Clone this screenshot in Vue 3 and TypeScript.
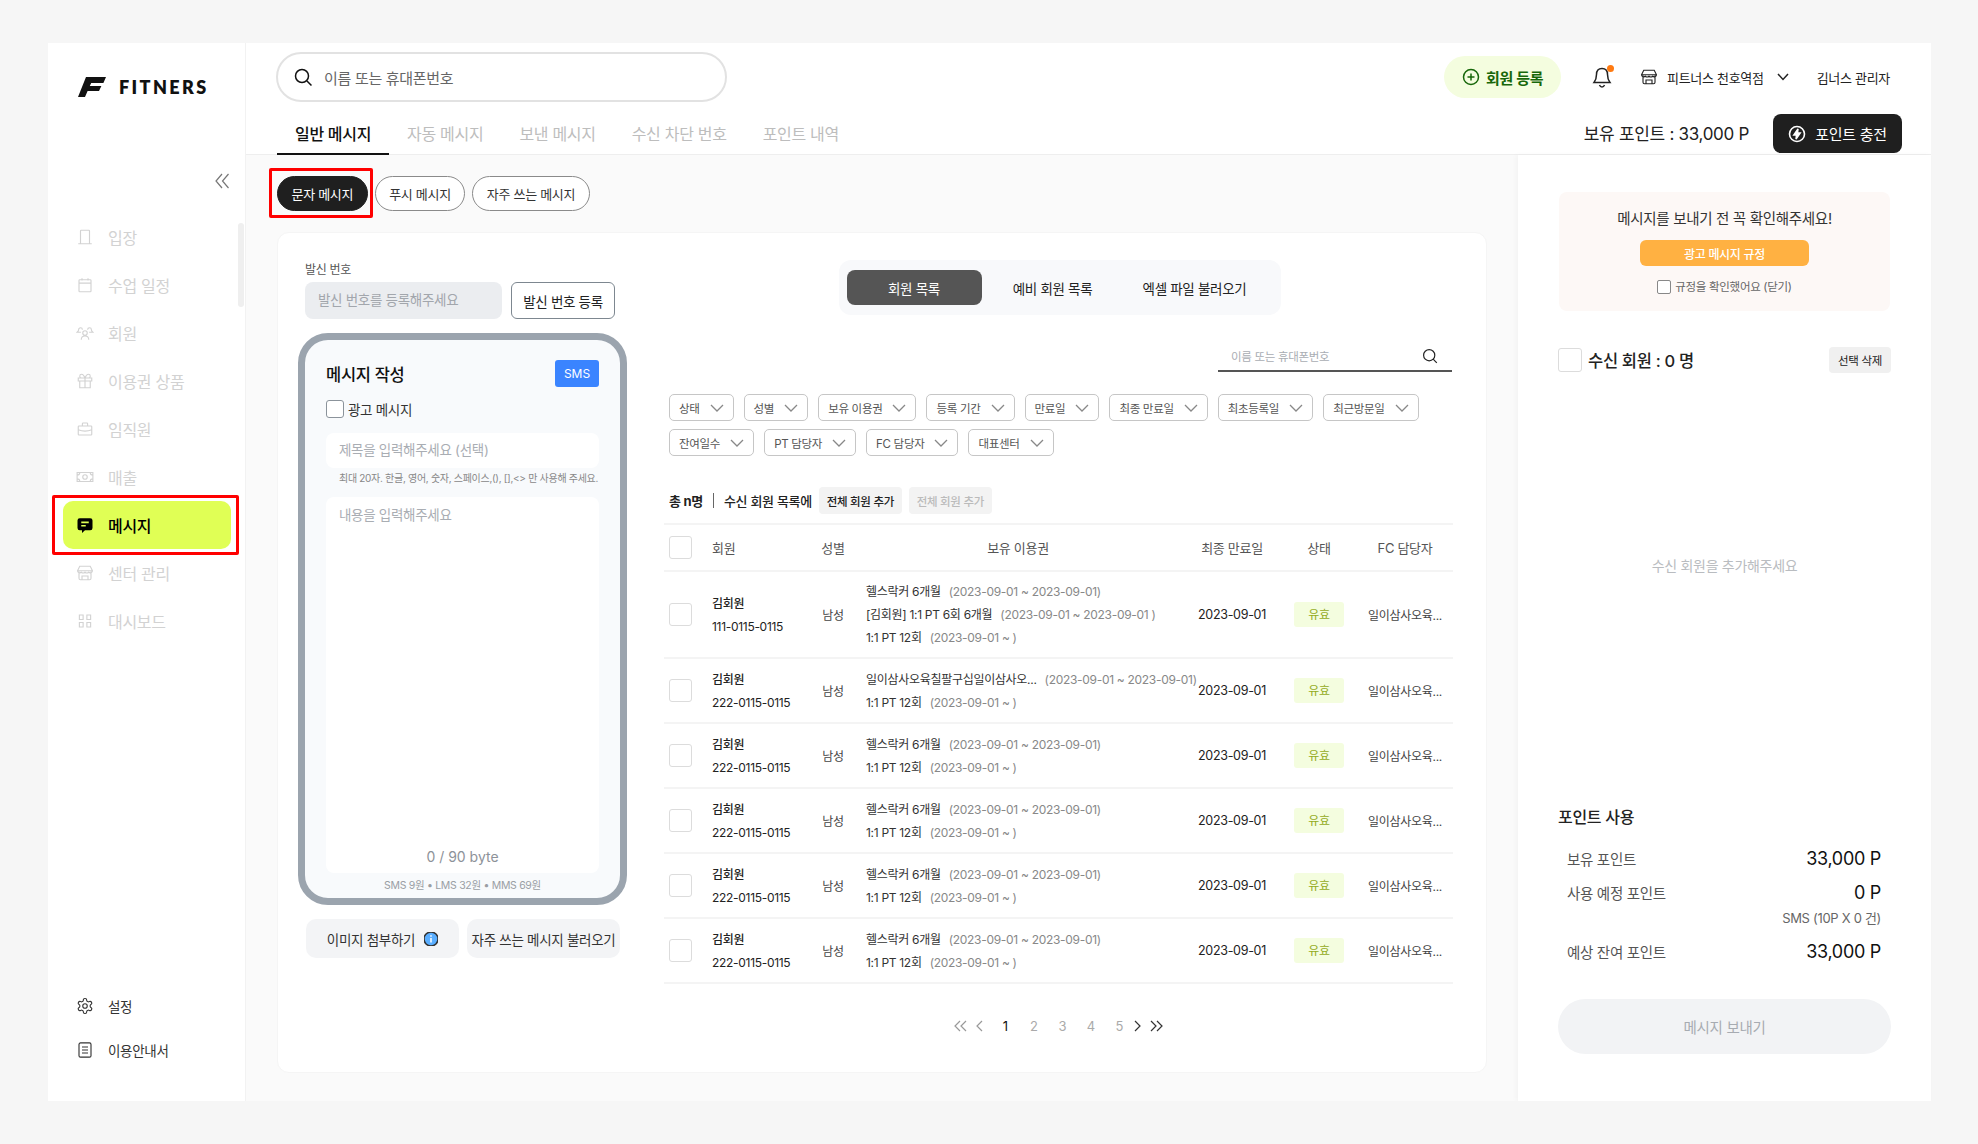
<template>
  <div class="frame">
    <aside class="sidebar">
      <div class="logo">
        <svg width="28" height="20" viewBox="0 0 28 20"><path d="M8 0H28L25.4 6H13.2L11.8 9H23.4L21 14H9.6L7 20H0Z" fill="#111" /></svg>
        <span>FITNERS</span>
      </div>
      <button class="collapse">
        <svg width="16" height="16" viewBox="0 0 16 16"><path d="M8 1 2 8l6 7M14.5 1l-6 7 6 7" /></svg>
      </button>
      <nav class="nav">
        <a v-for="item in navItems" :key="item.label" class="nav-item" :class="{ active: item.active }">
          <svg v-if="item.active" class="nav-icon" viewBox="0 0 24 24">
            <path d="M5 3h14a3 3 0 0 1 3 3v10a3 3 0 0 1-3 3h-7l-4 3.500V19H5a3 3 0 0 1-3-3V6a3 3 0 0 1 3-3z" fill="#000" />
            <path d="M7 8.500h10M7 13h6" stroke="#e0ff55" stroke-width="2.200" fill="none" />
          </svg>
          <svg v-else class="nav-icon" viewBox="0 0 24 24"><path :d="item.icon" /></svg>
          <span>{{ item.label }}</span>
        </a>
        <i class="scroll-thumb"></i>
      </nav>
      <div class="side-bottom">
        <a class="bottom-item">
          <svg class="nav-icon" viewBox="0 0 24 24"><path d="M12.220 2h-.44a2 2 0 0 0-2 2v.18a2 2 0 0 1-1 1.730l-.43.25a2 2 0 0 1-2 0l-.15-.08a2 2 0 0 0-2.730.73l-.22.38a2 2 0 0 0 .73 2.730l.15.1a2 2 0 0 1 1 1.720v.51a2 2 0 0 1-1 1.740l-.15.09a2 2 0 0 0-.73 2.730l.22.38a2 2 0 0 0 2.730.73l.15-.08a2 2 0 0 1 2 0l.43.25a2 2 0 0 1 1 1.730V20a2 2 0 0 0 2 2h.44a2 2 0 0 0 2-2v-.18a2 2 0 0 1 1-1.730l.43-.25a2 2 0 0 1 2 0l.15.08a2 2 0 0 0 2.730-.73l.22-.39a2 2 0 0 0-.73-2.730l-.15-.08a2 2 0 0 1-1-1.740v-.5a2 2 0 0 1 1-1.740l.15-.09a2 2 0 0 0 .73-2.730l-.22-.38a2 2 0 0 0-2.730-.73l-.15.08a2 2 0 0 1-2 0l-.43-.25a2 2 0 0 1-1-1.730V4a2 2 0 0 0-2-2zM12 15a3 3 0 1 0 0-6 3 3 0 0 0 0 6z" /></svg>
          <span>설정</span>
        </a>
        <a class="bottom-item">
          <svg class="nav-icon" viewBox="0 0 24 24"><path d="M6 2.500h12a2 2 0 0 1 2 2v15a2 2 0 0 1-2 2H6a2 2 0 0 1-2-2v-15a2 2 0 0 1 2-2zM8 8h8M8 12h8M8 16h8" /></svg>
          <span>이용안내서</span>
        </a>
      </div>
    </aside>

    <div class="main">
      <header class="header">
        <div class="header-top">
          <div class="search">
            <svg width="20" height="20" viewBox="0 0 20 20"><circle cx="9" cy="9" r="6.500" /><path d="m14 14 4.500 4.500" /></svg>
            <span>이름 또는 휴대폰번호</span>
          </div>
          <div class="top-actions">
            <button class="register">
              <svg width="18" height="18" viewBox="0 0 18 18"><circle cx="9" cy="9" r="7.500" /><path d="M9 5.500v7M5.500 9h7" /></svg>
              회원 등록
            </button>
            <span class="bell">
              <svg width="20" height="22" viewBox="0 0 20 22"><path d="M10 2.500c-3.500 0-5.500 2.500-5.500 6 0 4-1 6-2.500 8h16c-1.500-2-2.500-4-2.500-8 0-3.500-2-6-5.500-6zM7.500 19c.5 1.300 1.400 2 2.500 2s2-.7 2.500-2" /></svg>
              <i></i>
            </span>
            <span class="branch">
              <svg width="18" height="18" viewBox="0 0 24 24"><path d="M4 10v9a2 2 0 0 0 2 2h12a2 2 0 0 0 2-2v-9M5 3h14l3 6a3 3 0 0 1-5 2 3.500 3.500 0 0 1-5 0 3.500 3.500 0 0 1-5 0 3 3 0 0 1-5-2zM2.500 9h19M8 21v-5h8v5" /></svg>
              피트너스 천호역점
              <svg class="chev" width="12" height="8" viewBox="0 0 12 8"><path d="m1 1 5 5.500L11 1" /></svg>
            </span>
            <span class="admin">김너스 관리자</span>
          </div>
        </div>
        <div class="header-bottom">
          <div class="tabs">
            <a v-for="(tab, i) in tabs" :key="tab" class="tab" :class="{ on: i === 0 }">{{ tab }}</a>
          </div>
          <div class="point-area">
            <span class="point-text">보유 포인트 : 33,000 P</span>
            <button class="charge">
              <svg width="18" height="18" viewBox="0 0 18 18">
                <circle cx="9" cy="9" r="7.500" fill="none" stroke="#fff" stroke-width="1.600" />
                <path d="M10 3.800 5.800 10H8.500L8 14.200 12.200 8H9.500z" fill="#fff" />
              </svg>
              포인트 충전
            </button>
          </div>
        </div>
      </header>

      <div class="body">
        <section class="content">
          <div class="pills">
            <button v-for="(pill, i) in pills" :key="pill" class="pill" :class="{ on: i === 0 }">
              {{ pill }}
              <i v-if="i === 0" class="red-box"></i>
            </button>
          </div>

          <div class="card">
            <div class="compose">
              <div class="sender">
                <label>발신 번호</label>
                <div class="sender-row">
                  <div class="sender-input">발신 번호를 등록해주세요</div>
                  <button class="sender-btn">발신 번호 등록</button>
                </div>
              </div>

              <div class="phone">
                <div class="phone-head">
                  <strong>메시지 작성</strong>
                  <span class="sms">SMS</span>
                </div>
                <div class="ad-check"><i class="box"></i>광고 메시지</div>
                <div class="title-input">제목을 입력해주세요 (선택)</div>
                <p class="helper">최대 20자. 한글, 영어, 숫자, 스페이스,(), [],&lt;&gt; 만 사용해 주세요.</p>
                <div class="body-input">
                  <span>내용을 입력해주세요</span>
                  <span class="bytes">0 / 90 byte</span>
                </div>
                <div class="fees">SMS 9원 • LMS 32원 • MMS 69원</div>
              </div>

              <div class="compose-btns">
                <button>
                  이미지 첨부하기
                  <svg width="14" height="14" viewBox="0 0 14 14">
                    <circle cx="7" cy="7" r="7" fill="#5aaeff" />
                    <path d="M7 6v4.500M7 3.300v1.400" stroke="#fff" stroke-width="1.500" fill="none" />
                  </svg>
                </button>
                <button>자주 쓰는 메시지 불러오기</button>
              </div>
            </div>

            <div class="members">
              <div class="segment">
                <button class="on">회원 목록</button>
                <button>예비 회원 목록</button>
                <button>엑셀 파일 불러오기</button>
              </div>

              <div class="member-search">
                <span>이름 또는 휴대폰번호</span>
                <svg width="16" height="16" viewBox="0 0 20 20"><circle cx="9" cy="9" r="7" /><path d="m14 14 4.500 4.500" /></svg>
              </div>

              <div class="filters">
                <button v-for="f in filters" :key="f" class="filter">
                  {{ f }}
                  <svg width="14" height="8" viewBox="0 0 14 8"><path d="m1 1 6 6 6-6" /></svg>
                </button>
              </div>

              <div class="total-row">
                <b>총 n명</b>
                <i class="sep"></i>
                <span>수신 회원 목록에</span>
                <button class="add">전체 회원 추가</button>
                <button class="add off">전체 회원 추가</button>
              </div>

              <div class="table">
                <div class="row head">
                  <span><i class="cb"></i></span>
                  <span>회원</span>
                  <span class="c">성별</span>
                  <span class="c">보유 이용권</span>
                  <span class="c">최종 만료일</span>
                  <span class="c">상태</span>
                  <span class="c fc">FC 담당자</span>
                </div>
                <div v-for="(m, i) in members" :key="i" class="row" :class="{ tall: m.tickets.length > 2 }">
                  <span><i class="cb"></i></span>
                  <div class="who">
                    <b>김회원</b>
                    <span>{{ m.phone }}</span>
                  </div>
                  <span class="c small">남성</span>
                  <div class="tickets">
                    <div v-for="t in m.tickets" :key="t.name">{{ t.name }}<em>{{ t.period }}</em></div>
                  </div>
                  <span class="c date">2023-09-01</span>
                  <span class="badge">유효</span>
                  <span class="c fc small">일이삼사오육...</span>
                </div>
              </div>

              <div class="pager">
                <svg class="lite" width="13" height="12" viewBox="0 0 13 12"><path d="M6 1 1 6l5 5M12 1 7 6l5 5" /></svg>
                <svg class="lite" width="8" height="12" viewBox="0 0 8 12"><path d="M7 1 2 6l5 5" /></svg>
                <span v-for="n in 5" :key="n" :class="{ on: n === 1 }">{{ n }}</span>
                <svg width="8" height="12" viewBox="0 0 8 12"><path d="m1 1 5 5-5 5" /></svg>
                <svg width="13" height="12" viewBox="0 0 13 12"><path d="m1 1 5 5-5 5M7 1l5 5-5 5" /></svg>
              </div>
            </div>
          </div>
        </section>

        <aside class="panel">
          <div class="notice">
            <p>메시지를 보내기 전 꼭 확인해주세요!</p>
            <button>광고 메시지 규정</button>
            <div class="rule"><i></i>규정을 확인했어요 (닫기)</div>
          </div>

          <div class="recipients">
            <i class="cb big"></i>
            <strong>수신 회원 : 0 명</strong>
            <button>선택 삭제</button>
          </div>
          <p class="empty">수신 회원을 추가해주세요</p>

          <div class="points">
            <h3>포인트 사용</h3>
            <div class="pt-row"><span>보유 포인트</span><b>33,000 P</b></div>
            <div class="pt-row second"><span>사용 예정 포인트</span><b>0 P</b></div>
            <div class="pt-note">SMS (10P X 0 건)</div>
            <div class="pt-row third"><span>예상 잔여 포인트</span><b>33,000 P</b></div>
            <button class="send">메시지 보내기</button>
          </div>
        </aside>
      </div>
    </div>
  </div>
</template>

<script setup lang="ts">
interface NavItem {
  label: string;
  icon: string;
  active?: boolean;
}

interface Ticket {
  name: string;
  period: string;
}

interface Member {
  phone: string;
  tickets: Ticket[];
}

const navItems: NavItem[] = [
  { label: "입장", icon: "M6 21V4a1 1 0 0 1 1-1h10a1 1 0 0 1 1 1v17M3 21h18M14.500 12h.01" },
  { label: "수업 일정", icon: "M5 5h14a1 1 0 0 1 1 1v14a1 1 0 0 1-1 1H5a1 1 0 0 1-1-1V6a1 1 0 0 1 1-1zM4 9.500h16M8 3v3M16 3v3" },
  { label: "회원", icon: "M12 9a3 3 0 1 1 0 6 3 3 0 0 1 0-6zM7 21c0-3 2-5 5-5s5 2 5 5M6 5a2.500 2.500 0 0 1 2.500 2.500M6 5a2.500 2.500 0 0 0-2.500 2.500c0 1-1 2.500-2 3.500h5M18 5a2.500 2.500 0 0 0-2.500 2.500M18 5a2.500 2.500 0 0 1 2.500 2.500c0 1 1 2.500 2 3.500h-5" },
  { label: "이용권 상품", icon: "M3 8h18v4H3zM5 12v9h14v-9M12 8v13M12 8S10 3 7.500 3a2.500 2.500 0 0 0 0 5M12 8s2-5 4.500-5a2.500 2.500 0 0 1 0 5" },
  { label: "임직원", icon: "M4 8h16a1 1 0 0 1 1 1v10a1 1 0 0 1-1 1H4a1 1 0 0 1-1-1V9a1 1 0 0 1 1-1zM8.500 8V5a1 1 0 0 1 1-1h5a1 1 0 0 1 1 1v3M3 13c5 2 13 2 18 0" },
  { label: "매출", icon: "M1.500 6h21v12h-21zM12 9a3 3 0 1 0 0 6 3 3 0 0 0 0-6zM1.500 9.500A3.500 3.500 0 0 0 5 6M22.500 9.500A3.500 3.500 0 0 1 19 6M1.500 14.500A3.500 3.500 0 0 1 5 18M22.500 14.500A3.500 3.500 0 0 0 19 18" },
  { label: "메시지", icon: "", active: true },
  { label: "센터 관리", icon: "M4 10v9a2 2 0 0 0 2 2h12a2 2 0 0 0 2-2v-9M5 3h14l3 6a3 3 0 0 1-5 2 3.500 3.500 0 0 1-5 0 3.500 3.500 0 0 1-5 0 3 3 0 0 1-5-2zM2.500 9h19M8 21v-5h8v5" },
  { label: "대시보드", icon: "M4.500 4h5v6h-5zM14.500 4h5v6h-5zM4.500 14h5v6h-5zM14.500 14h5v6h-5z" },
];

const tabs = ["일반 메시지", "자동 메시지", "보낸 메시지", "수신 차단 번호", "포인트 내역"];
const pills = ["문자 메시지", "푸시 메시지", "자주 쓰는 메시지"];
const filters = [
  "상태", "성별", "보유 이용권", "등록 기간", "만료일", "최종 만료일", "최초등록일", "최근방문일",
  "잔여일수", "PT 담당자", "FC 담당자", "대표센터",
];

const health: Ticket = { name: "헬스락커 6개월", period: "(2023-09-01 ~ 2023-09-01)" };
const pt12: Ticket = { name: "1:1 PT 12회", period: "(2023-09-01 ~ )" };

const members: Member[] = [
  {
    phone: "111-0115-0115",
    tickets: [health, { name: "[김회원] 1:1 PT 6회 6개월", period: "(2023-09-01 ~ 2023-09-01 )" }, pt12],
  },
  {
    phone: "222-0115-0115",
    tickets: [{ name: "일이삼사오육칠팔구십일이삼사오...", period: "(2023-09-01 ~ 2023-09-01)" }, pt12],
  },
  { phone: "222-0115-0115", tickets: [health, pt12] },
  { phone: "222-0115-0115", tickets: [health, pt12] },
  { phone: "222-0115-0115", tickets: [health, pt12] },
  { phone: "222-0115-0115", tickets: [health, pt12] },
];
</script>

<style>
html,
body {
  margin: 0;
  background: #f6f6f6;
}
</style>

<style scoped>
* {
  box-sizing: border-box;
}

.frame {
  display: flex;
  width: 1883px;
  height: 1058px;
  margin: 43px 0 0 48px;
  background: #fff;
  color: #222;
  font-family: Inter, "Noto Sans CJK KR", sans-serif;
  font-size: 14px;
  letter-spacing: -0.3px;
}

button {
  font: inherit;
  letter-spacing: inherit;
  border: 0;
  background: none;
  color: inherit;
  padding: 0;
}

svg {
  flex: none;
  fill: none;
  stroke: currentColor;
  stroke-width: 1.5;
}

i {
  display: block;
}

p,
h3 {
  margin: 0;
}

/* sidebar */
.sidebar {
  position: relative;
  display: flex;
  flex-direction: column;
  width: 198px;
  flex: none;
  border-right: 1px solid #f2f2f2;
}

.logo {
  display: flex;
  align-items: center;
  gap: 13px;
  padding: 34px 0 0 30px;
  height: 54px;
}

.logo svg {
  stroke: none;
}

.logo span {
  font-weight: 800;
  font-size: 18px;
  letter-spacing: 2.4px;
  color: #111;
  font-family: Lato, sans-serif;
}

.collapse {
  align-self: flex-end;
  margin: 76px 15px 0 0;
  height: 16px;
  color: #777;
}

.collapse svg {
  stroke-width: 1.2;
  display: block;
}

.nav {
  position: relative;
  display: flex;
  flex-direction: column;
  margin-top: 24px;
}

.nav-item,
.bottom-item {
  display: flex;
  align-items: center;
  gap: 14px;
  height: 48px;
  padding-left: 28px;
  color: #d2d2d2;
  font-size: 16px;
}

.nav-icon {
  width: 18px;
  height: 18px;
  stroke-width: 1.5;
}

.nav-item.active {
  position: relative;
  margin: 0 14px 0 15px;
  padding-left: 13px;
  background: #e0ff55;
  border-radius: 10px;
  color: #000;
  font-weight: 500;
}

.nav-item.active .nav-icon {
  stroke: none;
}

.nav-item.active::after {
  content: "";
  position: absolute;
  inset: -6px -8px -6px -11px;
  border: 3px solid #f00;
  border-radius: 2px;
}

.scroll-thumb {
  position: absolute;
  top: 10px;
  right: 1px;
  width: 6px;
  height: 84px;
  border-radius: 3px;
  background: #efefef;
}

.side-bottom {
  margin-top: auto;
  padding-bottom: 29px;
}

.bottom-item {
  height: 44px;
  color: #333;
  font-size: 13.500px;
}

/* header */
.main {
  flex: 1;
  display: flex;
  flex-direction: column;
  min-width: 0;
}

.header {
  flex: none;
  height: 112px;
  border-bottom: 1px solid #eee;
}

.header-top {
  display: flex;
  justify-content: space-between;
  align-items: center;
  height: 50px;
  margin-top: 9px;
  padding: 0 41px 0 30px;
}

.search {
  display: flex;
  align-items: center;
  gap: 11px;
  width: 451px;
  height: 50px;
  padding-left: 15px;
  border: 2px solid #e2e2e2;
  border-radius: 25px;
  font-size: 15px;
  color: #666;
}

.search svg {
  color: #111;
}

.top-actions {
  display: flex;
  align-items: center;
  font-size: 13px;
}

.register {
  display: flex;
  align-items: center;
  justify-content: center;
  gap: 6px;
  width: 117px;
  height: 42px;
  border-radius: 21px;
  background: #f4fddf;
  color: #17670a;
  font-size: 15px;
  font-weight: 700;
}

.bell {
  position: relative;
  display: block;
  margin: 0 0 0 31px;
  height: 22px;
  color: #222;
}

.bell svg {
  display: block;
}

.bell i {
  position: absolute;
  top: -1px;
  right: -2px;
  width: 7px;
  height: 7px;
  border-radius: 50%;
  background: #ff7a11;
}

.branch {
  display: flex;
  align-items: center;
  gap: 9px;
  margin-left: 28px;
}

.chev {
  margin-left: 4px;
}

.admin {
  margin-left: 28px;
}

.header-bottom {
  display: flex;
  justify-content: space-between;
  height: 53px;
  padding: 0 29px 0 31px;
}

.tabs {
  display: flex;
  height: 53px;
}

.tab {
  display: flex;
  align-items: center;
  padding: 11px 18px 0;
  font-size: 16px;
  color: #bdbdbd;
  border-bottom: 2px solid transparent;
}

.tab.on {
  color: #111;
  font-weight: 500;
  border-bottom-color: #111;
}

.point-area {
  display: flex;
  align-items: flex-start;
  gap: 24px;
  padding-top: 12px;
}

.point-text {
  font-size: 17px;
  line-height: 40px;
}

.charge {
  display: flex;
  align-items: center;
  justify-content: center;
  gap: 9px;
  width: 129px;
  height: 39px;
  border-radius: 8px;
  background: #1f1f1f;
  color: #fff;
  font-size: 15px;
}

/* body */
.body {
  flex: 1;
  display: flex;
  min-height: 0;
}

.content {
  flex: 1;
  min-width: 0;
  padding: 21px 31px 0 31px;
  background: #fafafa;
}

.pills {
  display: flex;
  gap: 7px;
}

.pill {
  position: relative;
  height: 35px;
  padding: 0 13.500px;
  border: 1.500px solid #8a8a8a;
  border-radius: 18px;
  font-size: 13px;
  background: #fff;
  color: #333;
}

.pill.on {
  background: #1f1f1f;
  border-color: #1f1f1f;
  color: #fff;
}

.red-box {
  position: absolute;
  inset: -9px -6px -8px -9px;
  border: 3px solid #f00;
  border-radius: 2px;
}

.card {
  display: flex;
  gap: 37px;
  height: 841px;
  margin-top: 21px;
  padding: 0 33px 0 21px;
  background: #fff;
  border-radius: 12px;
  border: 1px solid #f5f5f5;
}

.compose {
  flex: none;
  width: 329px;
  margin-left: -1px;
}

.sender {
  padding: 29px 0 0 7px;
}

.sender label {
  display: block;
  height: 20px;
  font-size: 12px;
  line-height: 16px;
  color: #555;
}

.sender-row {
  display: flex;
  gap: 9px;
}

.sender-input {
  width: 197px;
  height: 37px;
  padding-left: 13px;
  border-radius: 8px;
  background: #ebedf0;
  color: #a2a6ac;
  line-height: 37px;
  font-size: 13.500px;
}

.sender-btn {
  width: 104px;
  height: 37px;
  border: 1.500px solid #7d8790;
  border-radius: 6px;
  font-size: 13.500px;
}

.phone {
  display: flex;
  flex-direction: column;
  height: 572px;
  margin-top: 14px;
  padding: 20px 21px 0;
  border: 7px solid #9ba4ae;
  border-radius: 30px;
  background: #f8fafc;
}

.phone-head {
  display: flex;
  justify-content: space-between;
  align-items: center;
  height: 27px;
}

.phone-head strong {
  font-weight: 500;
  font-size: 16.500px;
  color: #111;
}

.sms {
  width: 44px;
  height: 27px;
  border-radius: 3px;
  background: #3a84ff;
  color: #fff;
  font-size: 12px;
  line-height: 27px;
  text-align: center;
  letter-spacing: 0;
}

.ad-check {
  display: flex;
  align-items: center;
  gap: 4px;
  height: 18px;
  margin-top: 13px;
  font-size: 13.500px;
  color: #333;
}

.box {
  width: 18px;
  height: 18px;
  border: 1.500px solid #8b939b;
  border-radius: 3px;
  background: #fff;
}

.title-input {
  height: 35px;
  margin-top: 15px;
  padding-left: 13px;
  border-radius: 8px;
  background: #fff;
  color: #a9adb3;
  line-height: 35px;
  font-size: 13.500px;
}

.helper {
  height: 14px;
  margin-top: 3px;
  padding-left: 13px;
  font-size: 10px;
  line-height: 14px;
  color: #888;
  white-space: nowrap;
}

.body-input {
  flex: 1;
  display: flex;
  flex-direction: column;
  justify-content: space-between;
  margin-top: 12px;
  padding: 7px 13px 8px;
  border-radius: 8px;
  background: #fff;
  color: #a9adb3;
  font-size: 13.500px;
}

.bytes {
  align-self: center;
  color: #8d9299;
  font-size: 14px;
  letter-spacing: 0;
}

.fees {
  height: 25px;
  line-height: 25px;
  text-align: center;
  font-size: 10.500px;
  color: #9a9ea4;
}

.compose-btns {
  display: flex;
  gap: 8px;
  margin: 14px 7px 0 8px;
}

.compose-btns button {
  display: flex;
  align-items: center;
  justify-content: center;
  gap: 9px;
  width: 153px;
  height: 39px;
  border-radius: 10px;
  background: #f3f4f6;
  font-size: 13.500px;
  color: #333;
}

/* members */
.members {
  flex: 1;
  min-width: 0;
  display: flex;
  flex-direction: column;
}

.segment {
  align-self: center;
  display: flex;
  align-items: center;
  width: 442px;
  height: 55px;
  margin: 27px 0 0 2px;
  padding: 0 8px;
  border-radius: 12px;
  background: #f8f9fb;
}

.segment button {
  width: 142px;
  height: 35px;
  border-radius: 8px;
  font-size: 13.500px;
}

.segment button.on {
  width: 135px;
  background: #555;
  color: #fff;
}

.member-search {
  align-self: flex-end;
  display: flex;
  justify-content: space-between;
  align-items: center;
  width: 234px;
  height: 30px;
  margin: 27px 1px 0 0;
  padding: 0 14px 0 13px;
  border-bottom: 2px solid #555;
  font-size: 11.500px;
  color: #a9adb3;
}

.member-search svg {
  color: #222;
}

.filters {
  display: flex;
  flex-wrap: wrap;
  gap: 8px 10px;
  width: 760px;
  margin: 22px 0 0 5px;
}

.filter {
  display: flex;
  align-items: center;
  gap: 10px;
  height: 27px;
  padding: 0 9px;
  border: 1.500px solid #c6c6c6;
  border-radius: 5px;
  font-size: 11.500px;
  color: #555;
}

.filter svg {
  color: #888;
  stroke-width: 1.3;
}

.total-row {
  display: flex;
  align-items: center;
  height: 27px;
  margin: 31px 0 0 5px;
  font-size: 13px;
  font-weight: 500;
}

.total-row b {
  font-weight: 700;
}

.sep {
  width: 1px;
  height: 15px;
  margin: 0 10px;
  background: #666;
}

.add {
  width: 83px;
  height: 27px;
  margin-left: 7px;
  border-radius: 4px;
  background: #f3f3f3;
  font-size: 11.500px;
}

.add.off {
  color: #bbb;
}

.table {
  margin-top: 9px;
  border-top: 2px solid #f4f4f4;
}

.row {
  display: grid;
  grid-template-columns: 48px 88px 66px 304px 124px 50px 110px;
  align-items: center;
  height: 65px;
  border-bottom: 2px solid #f4f4f4;
  font-size: 12px;
}

.row.tall {
  height: 87px;
}

.row.head {
  height: 47px;
  font-size: 13px;
  color: #555;
}

.c {
  text-align: center;
}

.fc {
  padding-left: 12px;
}

.cb {
  width: 23px;
  height: 23px;
  margin-left: 5px;
  border: 1.500px solid #dcdcdc;
  border-radius: 3px;
}

.who {
  display: flex;
  flex-direction: column;
  gap: 6px;
  line-height: 17px;
}

.who b {
  font-weight: 500;
}

.small {
  color: #444;
}

.tickets {
  line-height: 23px;
  color: #333;
  white-space: nowrap;
}

.tickets em {
  margin-left: 8px;
  font-style: normal;
  color: #888;
}

.date {
  font-size: 12.500px;
}

.badge {
  display: block;
  width: 50px;
  height: 25px;
  border-radius: 3px;
  background: #f4fddf;
  color: #93ab1c;
  text-align: center;
  line-height: 25px;
}

.pager {
  display: flex;
  align-items: center;
  height: 20px;
  margin: 32px 0 0 290px;
  color: #333;
  font-size: 13px;
}

.pager svg {
  stroke-width: 1.200;
  margin-right: 8px;
}

.pager .lite {
  color: #999;
}

.pager span {
  width: 28.500px;
  text-align: center;
  color: #aaa;
}

.pager span.on {
  color: #111;
}

/* right panel */
.panel {
  position: relative;
  display: flex;
  flex-direction: column;
  width: 413px;
  flex: none;
  padding: 37px 40px 47px;
  background: #fff;
  box-shadow: -2px 0 5px rgba(0, 0, 0, 0.03);
}

.notice {
  height: 119px;
  margin: 0 1px;
  padding-top: 18px;
  border-radius: 8px;
  background: #fdf8f6;
  text-align: center;
}

.notice p {
  font-size: 14.500px;
  line-height: 18px;
  color: #333;
}

.notice button {
  display: block;
  width: 169px;
  height: 26px;
  margin: 12px auto 0;
  border-radius: 6px;
  background: #ffb142;
  color: #fff;
  font-size: 12px;
  font-weight: 500;
}

.rule {
  display: flex;
  align-items: center;
  justify-content: center;
  gap: 4px;
  margin-top: 13px;
  font-size: 11.500px;
  line-height: 16px;
  color: #666;
}

.rule i {
  width: 14px;
  height: 14px;
  border: 1.300px solid #888;
  border-radius: 2px;
  background: #fff;
}

.recipients {
  display: flex;
  align-items: center;
  height: 26px;
  margin-top: 36px;
}

.cb.big {
  width: 24px;
  height: 24px;
  margin: 0 6px 0 0;
}

.recipients strong {
  font-size: 16.500px;
  font-weight: 500;
}

.recipients button {
  width: 62px;
  height: 26px;
  margin-left: auto;
  border-radius: 4px;
  background: #f0f0f0;
  font-size: 11.500px;
}

.empty {
  margin-top: 182px;
  font-size: 14px;
  line-height: 22px;
  text-align: center;
  color: #b9bcc0;
}

.points {
  margin-top: auto;
}

.points h3 {
  font-size: 16px;
  font-weight: 500;
  line-height: 24px;
}

.pt-row {
  display: flex;
  justify-content: space-between;
  align-items: center;
  height: 24px;
  margin-top: 17px;
  padding: 0 10px 0 9px;
  font-size: 14.500px;
  color: #555;
}

.pt-row b {
  font-size: 18px;
  font-weight: 400;
  color: #111;
}

.pt-row.second {
  margin-top: 10px;
}

.pt-row.third {
  margin-top: 12px;
}

.pt-note {
  margin-top: 5px;
  padding-right: 10px;
  text-align: right;
  font-size: 13px;
  line-height: 18px;
  color: #666;
}

.send {
  display: block;
  width: 100%;
  height: 55px;
  margin-top: 36px;
  border-radius: 28px;
  background: #f2f3f5;
  color: #a7abb1;
  font-size: 14.500px;
}
</style>
